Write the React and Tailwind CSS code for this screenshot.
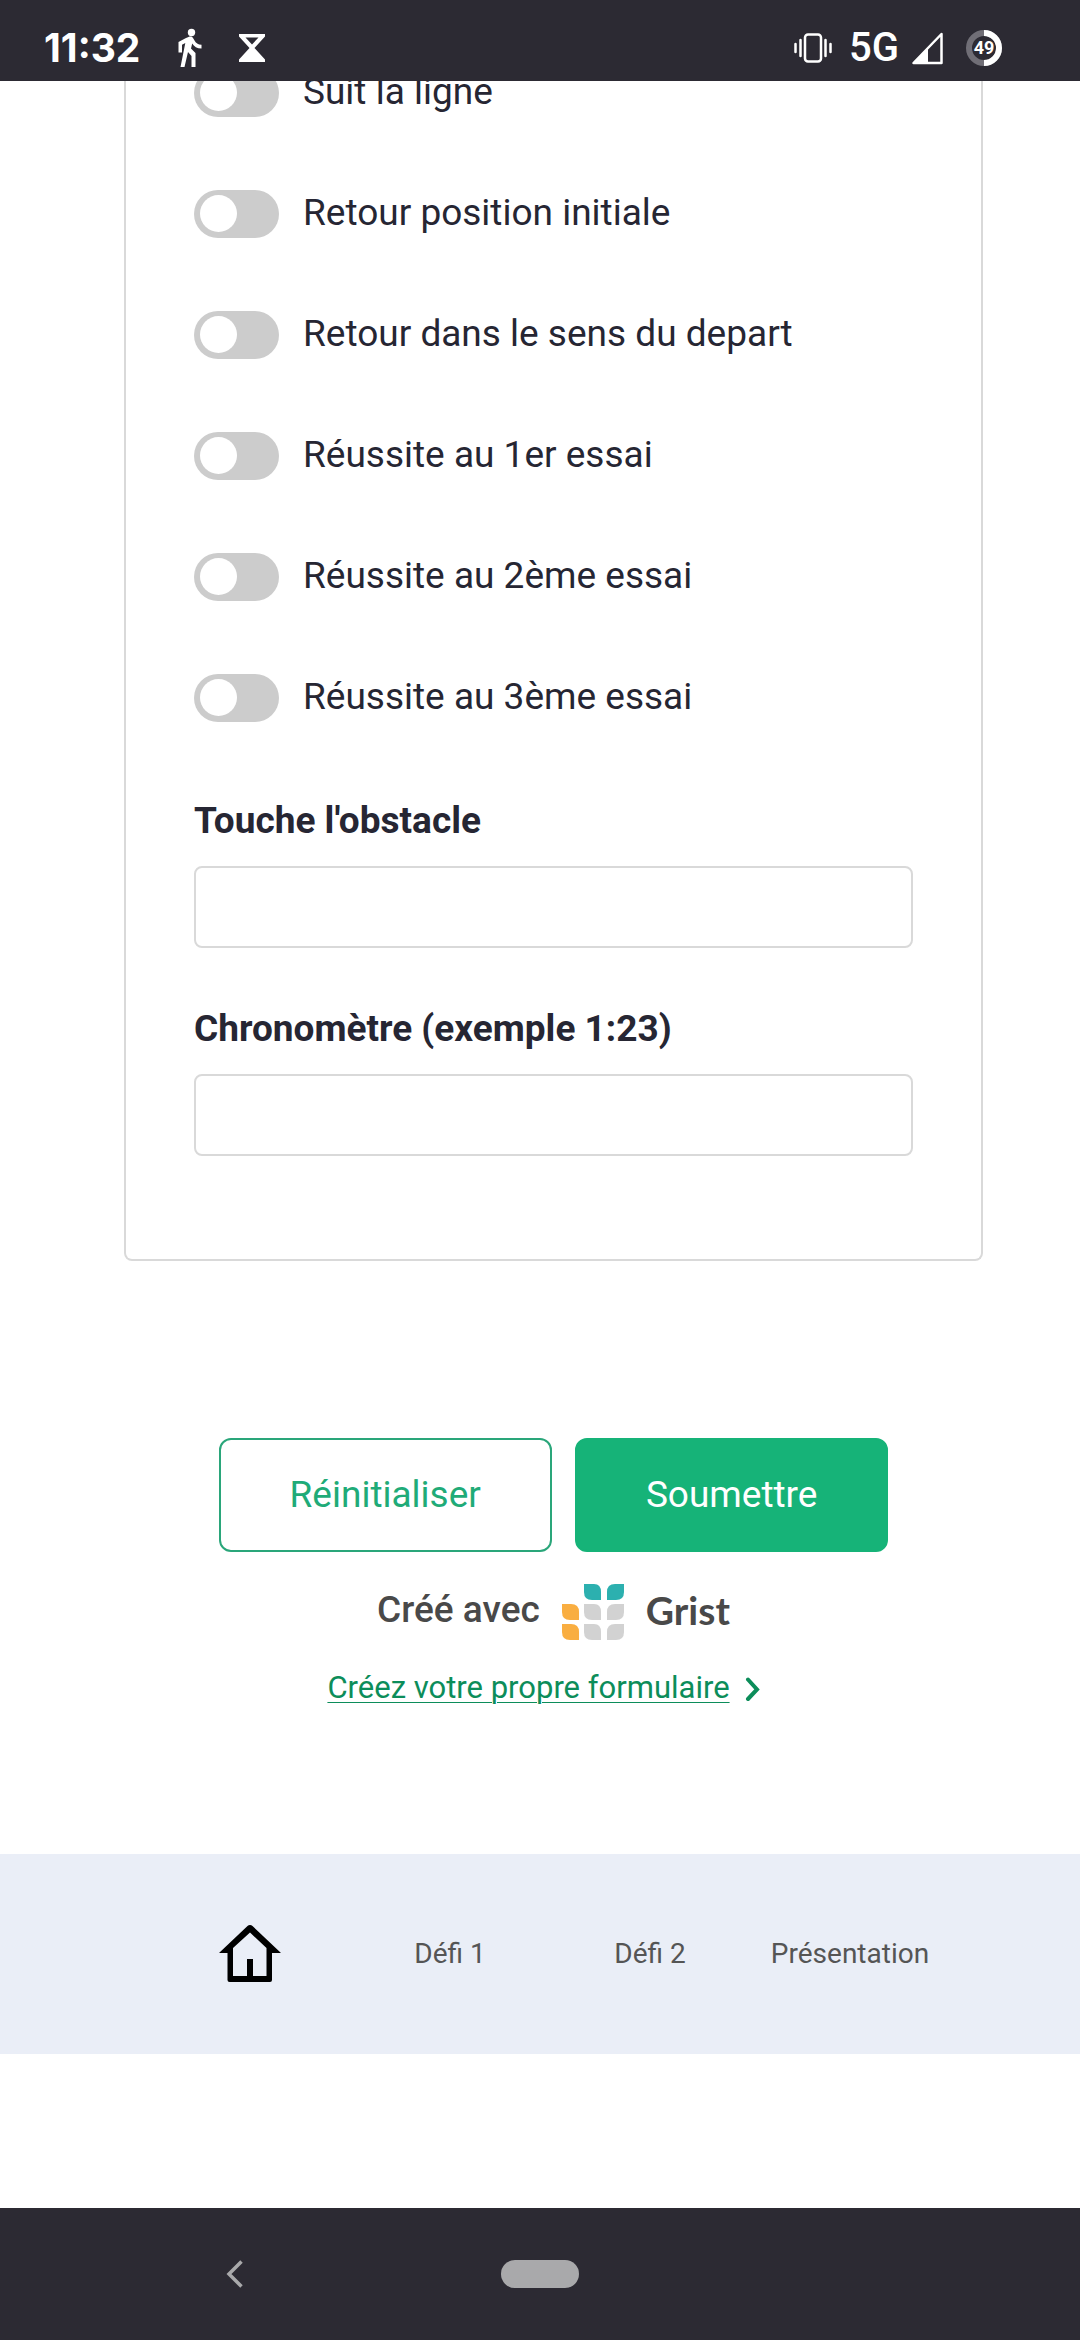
import React from "react";

const criteria = [
  "Suit la ligne",
  "Retour position initiale",
  "Retour dans le sens du depart",
  "Réussite au 1er essai",
  "Réussite au 2ème essai",
  "Réussite au 3ème essai",
];

const measures = [
  { id: "obstacle", label: "Touche l'obstacle" },
  { id: "chrono", label: "Chronomètre (exemple 1:23)" },
];

function WalkIcon() {
  return (
    <svg className="ml-[36px] h-[46px] w-[28px]" viewBox="0 0 28 46" fill="white" aria-hidden="true">
      <circle cx="15.500" cy="7.500" r="3.700" />
      <path d="M10 13 L2.500 17 V27.500 H6 V19.800 L9.300 18 L4.500 42 H8.500 L12 27 L15.500 31 V42 H19.500 V28 L15 23.500 L16.200 18.500 C18 21.500 21 23.500 25.500 23.500 V19.800 C22 19.800 19.800 18 18.500 15.500 L17 13 C16 11.500 14 11.300 12.500 12 Z" />
    </svg>
  );
}

function HourglassIcon() {
  return (
    <svg className="ml-[34px] h-[30px] w-[28px]" viewBox="0 0 28 30" fill="white" aria-hidden="true">
      <path fillRule="evenodd" d="M1 1 H27 V3.500 L16.500 15 L27 26.500 V29 H1 V26.500 L11.500 15 L1 3.500 Z M7.500 4.500 L14 11.500 L20.500 4.500 Z" />
    </svg>
  );
}

function VibrateIcon() {
  return (
    <svg className="h-[30px] w-[40px]" viewBox="0 0 40 30" fill="none" stroke="white" strokeWidth="2.500" strokeLinecap="round" aria-hidden="true">
      <rect x="12" y="1.500" width="16" height="27" rx="3" />
      <path d="M2.500 11 V19 M7.500 7 V23 M32.500 7 V23 M37.500 11 V19" />
    </svg>
  );
}

function SignalIcon() {
  return (
    <svg className="ml-[12px] h-[34px] w-[32px]" viewBox="0 0 32 34" aria-hidden="true">
      <path d="M2.500 32 L30.500 3 V32 Z" fill="none" stroke="white" strokeWidth="2.500" strokeLinejoin="round" />
      <path d="M2.500 32 L17 17 V32 Z" fill="white" />
    </svg>
  );
}

function BatteryIcon() {
  return (
    <svg className="ml-[22px] h-[38px] w-[38px]" viewBox="0 0 38 38" aria-label="49">
      <circle cx="19" cy="19" r="15" fill="none" stroke="#706e76" strokeWidth="6" />
      <path d="M19 4 A15 15 0 0 1 19 34" fill="none" stroke="white" strokeWidth="6" />
      <text x="19" y="25" textAnchor="middle" fill="white" fontFamily="Roboto, sans-serif" fontSize="18" fontWeight="700">49</text>
    </svg>
  );
}

function GristMark() {
  const leftLeaf = "M0 0 H10 Q17 0 17 8 V16 H8 Q0 16 0 8 Z";
  const rightLeaf = "M17 0 H8 Q0 0 0 8 V16 H9 Q17 16 17 8 Z";
  const cornerLeaf = "M0 0 H9 Q17 0 17 8 V16 H8 Q0 16 0 8 Z";
  return (
    <svg className="ml-[22px] h-[57px] w-[62px]" viewBox="0 0 62 57" aria-hidden="true">
      <path d={leftLeaf} transform="translate(22 0)" fill="#2cb0af" />
      <path d={rightLeaf} transform="translate(45 0)" fill="#2cb0af" />
      <path d={cornerLeaf} transform="translate(0 20)" fill="#f9ae41" />
      <path d={leftLeaf} transform="translate(22 20)" fill="#d2d2d2" />
      <path d={rightLeaf} transform="translate(45 20)" fill="#d2d2d2" />
      <path d={cornerLeaf} transform="translate(0 40)" fill="#f9ae41" />
      <path d={leftLeaf} transform="translate(22 40)" fill="#d2d2d2" />
      <path d={rightLeaf} transform="translate(45 40)" fill="#d2d2d2" />
    </svg>
  );
}

function HomeIcon() {
  return (
    <svg className="h-[58px] w-[62px]" viewBox="0 0 62 58" fill="black" aria-hidden="true">
      <path
        fillRule="evenodd"
        d="M31 0 Q32.500 0 33.500 1 L62 28 H53 V55 Q53 57 51 57 H10.500 Q8.500 57 8.500 55 V28 H0 L28.500 1 Q29.500 0 31 0 Z M31 7.500 L14 23 V51 H28 V34 H34 V51 H47.500 V23 Z"
      />
    </svg>
  );
}

export default function App() {
  return (
    <div className="flex min-h-screen flex-col bg-white font-['Roboto',sans-serif] text-[#262633]">
      <header className="relative z-10 flex h-[81px] items-center bg-[#2c2a33] pt-[14px] pr-[77px] pl-[44px] text-white">
        <span className="font-['Inter',sans-serif] text-[39px] leading-none font-bold">11:32</span>
        <WalkIcon />
        <HourglassIcon />
        <div className="ml-auto flex items-center">
          <VibrateIcon />
          <span className="ml-[16px] text-[40px] leading-none font-medium">5G</span>
          <SignalIcon />
          <BatteryIcon />
        </div>
      </header>

      <main className="grow">
        <form className="pr-[97px] pl-[124px]">
          <div className="-mt-[49px] rounded-b-lg border-2 border-t-0 border-[#d9d9d9] px-[68px] pb-[103px]">
            {criteria.map((name) => (
              <label key={name} className="flex h-[121px] items-center gap-[24px] text-[37px] leading-[48px]">
                <input type="checkbox" role="switch" className="peer sr-only" />
                <span className="flex h-[48px] w-[85px] shrink-0 items-center rounded-full bg-[#ccc] px-[6px] peer-checked:justify-end peer-checked:bg-[#16b378]">
                  <span className="size-[37px] rounded-full bg-white" />
                </span>
                <span className="pb-[2px]">{name}</span>
              </label>
            ))}
            <div className="flex flex-col gap-[57px] pt-[39px]">
              {measures.map(({ id, label }) => (
                <div key={id} className="flex flex-col gap-[21px]">
                  <label htmlFor={id} className="text-[37px] leading-[48px] font-bold">{label}</label>
                  <input id={id} type="text" className="h-[82px] w-full rounded-lg border-2 border-[#d9d9d9] px-4 text-[37px]" />
                </div>
              ))}
            </div>
          </div>

          <div className="mt-[177px] flex justify-center gap-[23px] text-[37px] leading-[48px]">
            <button type="reset" className="rounded-xl border-2 border-[#2aa67a] px-[69px] py-[31px] text-[#1fab78]">Réinitialiser</button>
            <button type="submit" className="rounded-xl border-2 border-[#16b378] bg-[#16b378] px-[69px] py-[31px] text-white">Soumettre</button>
          </div>
        </form>

        <div className="flex flex-col items-center pt-[32px] pr-[97px] pl-[124px]">
          <div className="flex items-center text-[#494949]">
            <span className="pb-[5px] text-[37px] leading-[48px] font-medium">Créé avec</span>
            <GristMark />
            <span className="ml-[22px] pb-[5px] font-['Lato',sans-serif] text-[39px] leading-[48px] font-bold">Grist</span>
          </div>
          <a href="#formulaire" className="mt-[26px] flex items-center gap-[14px] text-[31px] leading-[42px] text-[#0c8d5a]">
            <span className="underline decoration-1 underline-offset-4">Créez votre propre formulaire</span>
            <svg className="h-[26px] w-[36px]" viewBox="0 0 36 26" fill="none" stroke="currentColor" strokeWidth="4" strokeLinecap="round" aria-hidden="true">
              <path d="M4 4.500 L13 14.500 L4 24" />
            </svg>
          </a>
        </div>
      </main>

      <nav className="mb-[154px] grid h-[200px] grid-cols-4 items-center bg-[#eaeef7] pr-[130px] pl-[150px] text-center text-[28px] text-[#555]">
        <a href="#accueil" aria-label="Accueil" className="flex justify-center"><HomeIcon /></a>
        <a href="#defi-1">Défi 1</a>
        <a href="#defi-2">Défi 2</a>
        <a href="#presentation">Présentation</a>
      </nav>

      <footer className="grid h-[132px] grid-cols-3 items-center bg-[#2c2a33]">
        <button type="button" aria-label="Retour" className="ml-[110px] flex justify-center text-[#a9a9ab]">
          <svg className="h-[28px] w-[18px]" viewBox="0 0 18 28" fill="none" stroke="currentColor" strokeWidth="3.500" aria-hidden="true">
            <path d="M15.500 1.500 L3 14 L15.500 26.500" />
          </svg>
        </button>
        <button type="button" aria-label="Écran d'accueil" className="h-[28px] w-[78px] justify-self-center rounded-full bg-[#a9a9ab]" />
      </footer>
    </div>
  );
}
